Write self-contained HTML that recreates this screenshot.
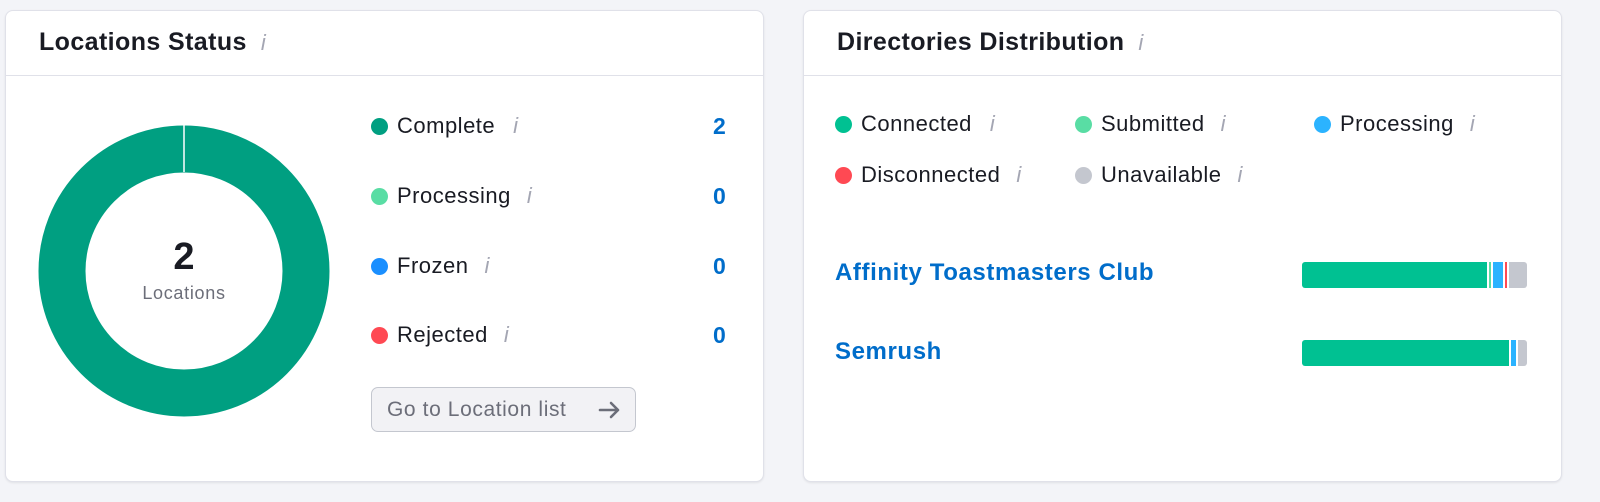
<!DOCTYPE html>
<html><head><style>
body{margin:0;width:1600px;height:502px;background:#f3f4f8;font-family:"Liberation Sans",Arial,sans-serif;position:relative;overflow:hidden}
.card{position:absolute;top:10px;height:470px;background:#fff;border:1px solid #e0e1e9;border-radius:8px;box-shadow:0 1px 2px rgba(0,0,0,.08)}
.hd{height:64px;border-bottom:1px solid #e0e1e9;position:relative}
.hd h2{position:absolute;left:33px;top:17px;margin:0;font-size:25px;font-weight:bold;color:#191b23;letter-spacing:0.4px}
.i{font-family:"Liberation Sans",sans-serif;font-style:italic;color:#a4a6b3;font-size:22px;font-weight:normal;margin-left:14px}
.abs{position:absolute}
.dot{position:absolute;width:17px;height:17px;border-radius:50%}
.lbl{position:absolute;font-size:22px;color:#191b23;letter-spacing:0.5px}
.num{position:absolute;font-size:23px;font-weight:bold;color:#006dca}
.link{position:absolute;font-size:24px;font-weight:bold;color:#006dca;letter-spacing:0.6px}
</style></head><body>
<div class="card" style="left:5px;width:757px">
 <div class="hd"><h2>Locations Status<span class="i">i</span></h2></div>
</div>
<svg class="abs" style="left:0;top:0" width="400" height="480">
 <circle cx="184" cy="271" r="122" fill="none" stroke="#009f81" stroke-width="47"/>
 <line x1="184" y1="124" x2="184" y2="172" stroke="#fff" stroke-width="1.5"/>
</svg>
<div class="abs" style="left:134px;top:236px;width:100px;text-align:center;font-size:38px;font-weight:bold;color:#191b23">2</div>
<div class="abs" style="left:104px;top:283px;width:160px;text-align:center;font-size:18px;color:#6c6e79;letter-spacing:0.7px">Locations</div>

<div class="dot" style="left:371px;top:118px;background:#009f81"></div><div class="lbl" style="left:397px;top:113px">Complete<span class="i" style="margin-left:18px">i</span></div><div class="num" style="left:713px;top:113px">2</div>
<div class="dot" style="left:371px;top:188px;background:#59dda4"></div><div class="lbl" style="left:397px;top:183px">Processing<span class="i" style="margin-left:16px">i</span></div><div class="num" style="left:713px;top:183px">0</div>
<div class="dot" style="left:371px;top:258px;background:#1a8fff"></div><div class="lbl" style="left:397px;top:253px">Frozen<span class="i" style="margin-left:16px">i</span></div><div class="num" style="left:713px;top:253px">0</div>
<div class="dot" style="left:371px;top:327px;background:#ff4953"></div><div class="lbl" style="left:397px;top:322px">Rejected<span class="i" style="margin-left:16px">i</span></div><div class="num" style="left:713px;top:322px">0</div>
<div class="abs" style="left:371px;top:387px;width:265px;height:45px;box-sizing:border-box;border:1px solid #c4c7cf;border-radius:7px;background:#f2f2f5;font-size:21px;color:#6c6e79;line-height:43px;padding-left:15px;letter-spacing:0.6px">Go to Location list
 <svg class="abs" style="left:226px;top:13px" width="24" height="18" viewBox="0 0 24 18"><path d="M2 9H20M13 2L20 9L13 16" fill="none" stroke="#6c6e79" stroke-width="2.6" stroke-linecap="round" stroke-linejoin="round"/></svg></div>

<div class="card" style="left:803px;width:757px">
 <div class="hd"><h2>Directories Distribution<span class="i">i</span></h2></div>
</div>
<div class="dot" style="left:835px;top:116px;background:#00c192"></div><div class="lbl" style="left:861px;top:111px">Connected<span class="i" style="margin-left:18px">i</span></div>
<div class="dot" style="left:1075px;top:116px;background:#59dda4"></div><div class="lbl" style="left:1101px;top:111px">Submitted<span class="i" style="margin-left:16px">i</span></div>
<div class="dot" style="left:1314px;top:116px;background:#2bb3ff"></div><div class="lbl" style="left:1340px;top:111px">Processing<span class="i" style="margin-left:16px">i</span></div>
<div class="dot" style="left:835px;top:167px;background:#ff4953"></div><div class="lbl" style="left:861px;top:162px">Disconnected<span class="i" style="margin-left:16px">i</span></div>
<div class="dot" style="left:1075px;top:167px;background:#c4c7cf"></div><div class="lbl" style="left:1101px;top:162px">Unavailable<span class="i" style="margin-left:16px">i</span></div>
<div class="link" style="left:835px;top:259px">Affinity Toastmasters Club</div>
<div class="link" style="left:835px;top:338px">Semrush</div>
<div class="abs" style="left:1302px;top:262px;width:225px;height:26px;border-radius:3px;overflow:hidden;background:#fff">
 <div class="abs" style="left:0;top:0;width:185px;height:26px;background:#00c192"></div>
 <div class="abs" style="left:187px;top:0;width:2px;height:26px;background:#59dda4"></div>
 <div class="abs" style="left:191px;top:0;width:10px;height:26px;background:#2bb3ff"></div>
 <div class="abs" style="left:203px;top:0;width:2px;height:26px;background:#ff4953"></div>
 <div class="abs" style="left:207px;top:0;width:18px;height:26px;background:#c4c7cf"></div>
</div>
<div class="abs" style="left:1302px;top:340px;width:225px;height:26px;border-radius:3px;overflow:hidden;background:#fff">
 <div class="abs" style="left:0;top:0;width:207px;height:26px;background:#00c192"></div>
 <div class="abs" style="left:209px;top:0;width:5px;height:26px;background:#2bb3ff"></div>
 <div class="abs" style="left:216px;top:0;width:9px;height:26px;background:#c4c7cf"></div>
</div>
</body></html>
